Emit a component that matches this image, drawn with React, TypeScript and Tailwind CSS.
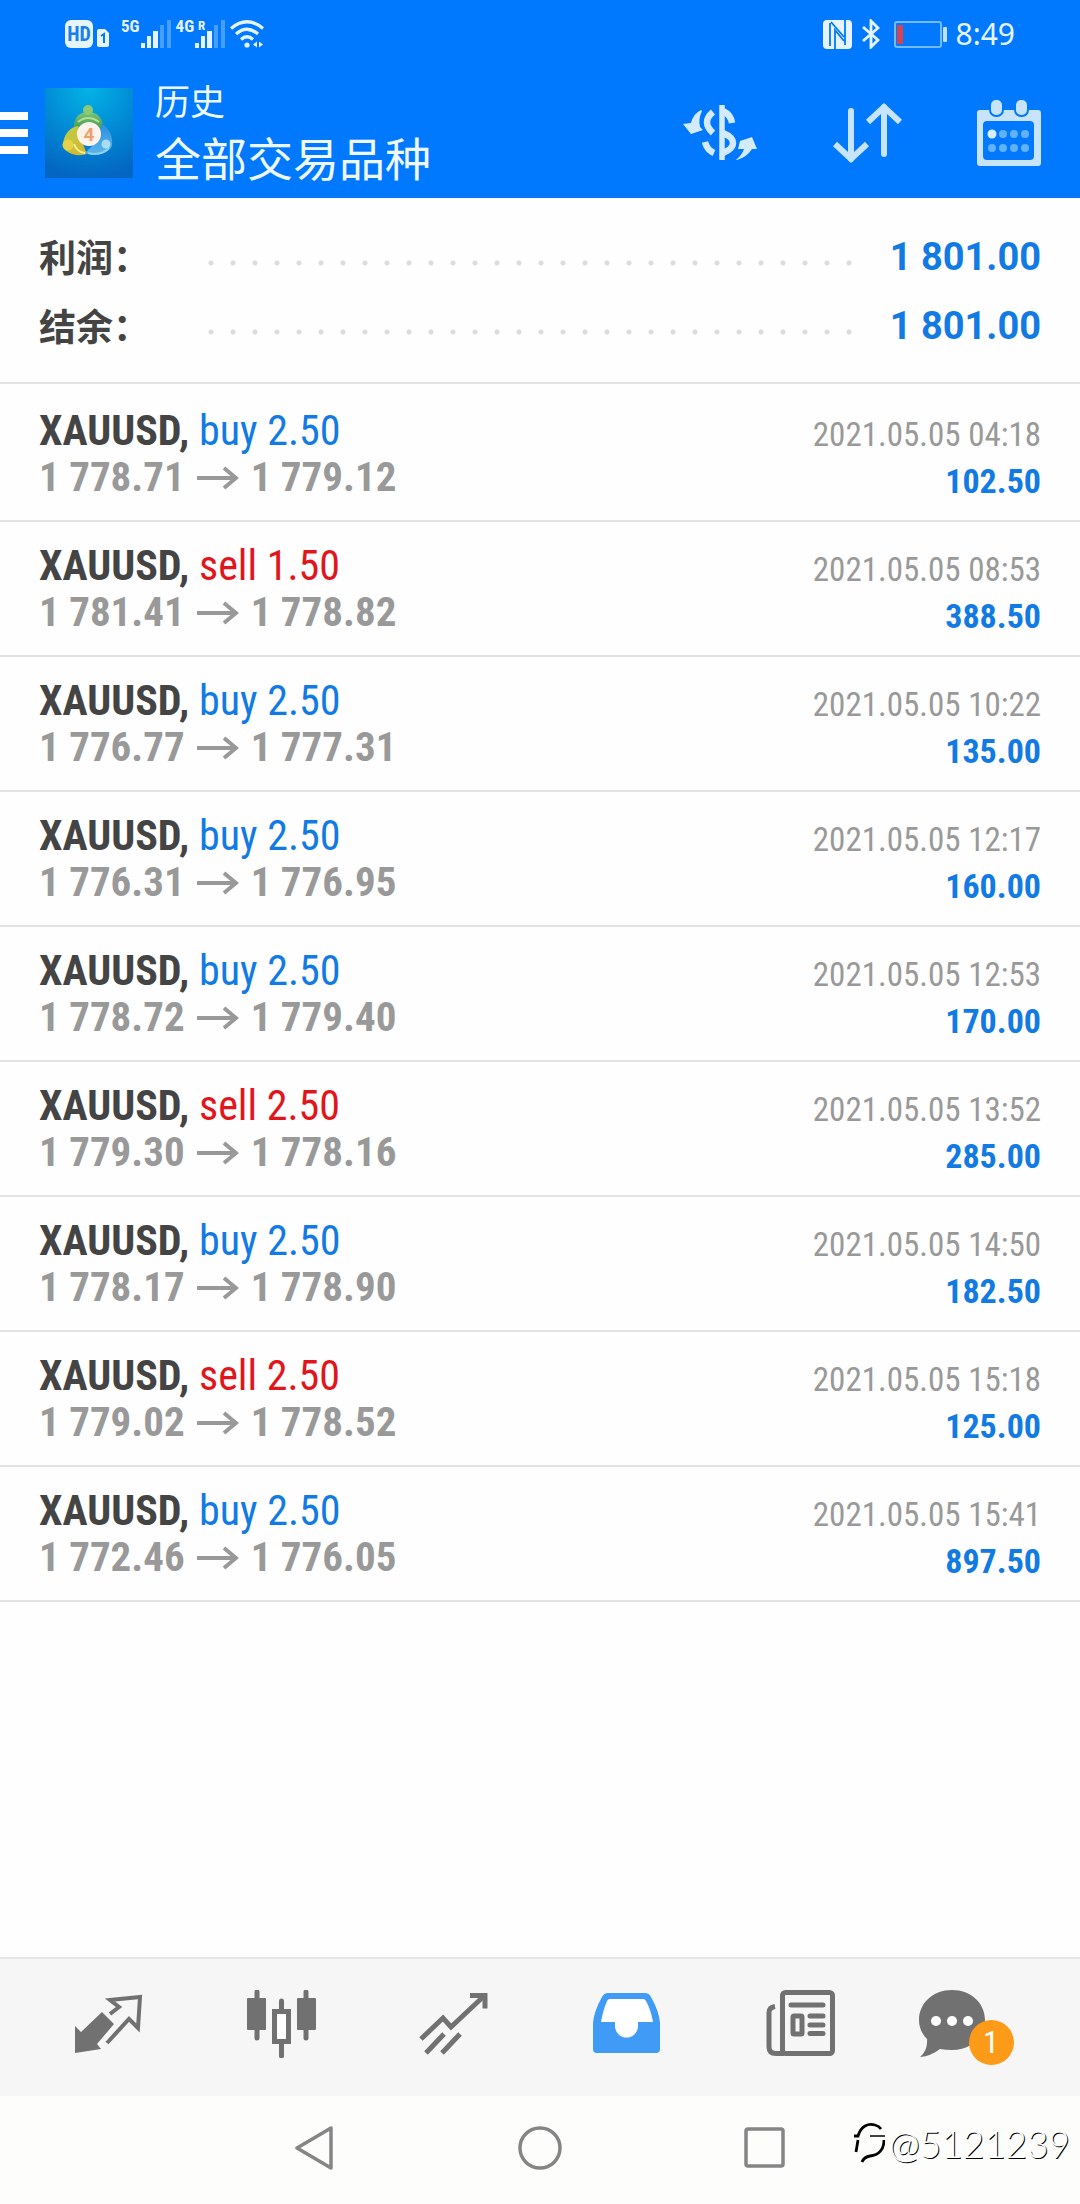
import { clsx } from "clsx";

interface Deal {
  symbol: string;
  side: "buy" | "sell";
  volume: string;
  open: string;
  close: string;
  time: string;
  profit: string;
}

const deals: Deal[] = [
  { symbol: "XAUUSD", side: "buy", volume: "2.50", open: "1 778.71", close: "1 779.12", time: "2021.05.05 04:18", profit: "102.50" },
  { symbol: "XAUUSD", side: "sell", volume: "1.50", open: "1 781.41", close: "1 778.82", time: "2021.05.05 08:53", profit: "388.50" },
  { symbol: "XAUUSD", side: "buy", volume: "2.50", open: "1 776.77", close: "1 777.31", time: "2021.05.05 10:22", profit: "135.00" },
  { symbol: "XAUUSD", side: "buy", volume: "2.50", open: "1 776.31", close: "1 776.95", time: "2021.05.05 12:17", profit: "160.00" },
  { symbol: "XAUUSD", side: "buy", volume: "2.50", open: "1 778.72", close: "1 779.40", time: "2021.05.05 12:53", profit: "170.00" },
  { symbol: "XAUUSD", side: "sell", volume: "2.50", open: "1 779.30", close: "1 778.16", time: "2021.05.05 13:52", profit: "285.00" },
  { symbol: "XAUUSD", side: "buy", volume: "2.50", open: "1 778.17", close: "1 778.90", time: "2021.05.05 14:50", profit: "182.50" },
  { symbol: "XAUUSD", side: "sell", volume: "2.50", open: "1 779.02", close: "1 778.52", time: "2021.05.05 15:18", profit: "125.00" },
  { symbol: "XAUUSD", side: "buy", volume: "2.50", open: "1 772.46", close: "1 776.05", time: "2021.05.05 15:41", profit: "897.50" },
];

const summary = [
  { label: "利润：", value: "1 801.00" },
  { label: "结余：", value: "1 801.00" },
];

function SignalBars() {
  return (
    <svg className="h-7 w-8" viewBox="0 0 32 28" fill="#e6f4ff">
      <rect x="1" y="23" width="4" height="5" />
      <rect x="7" y="16" width="4" height="12" />
      <rect x="13" y="11" width="5" height="17" />
      <g opacity="0.3">
        <rect x="20" y="5" width="4" height="23" />
        <rect x="27" y="0" width="4" height="28" />
      </g>
    </svg>
  );
}

function StatusBar() {
  return (
    <div className="flex h-[68px] items-center justify-between px-[65px] text-[#e6f4ff]">
      <div className="flex items-center">
        <span className="flex h-7 w-7 items-center justify-center rounded-md bg-[#e6f4ff] font-['Roboto_Condensed',sans-serif] text-[20px] font-bold text-[#1a7fe8]">
          HD
        </span>
        <svg className="mt-2 ml-1 h-[18px] w-3" viewBox="0 0 12 18">
          <path d="M2 0h6l4 4v12q0 2-2 2H2q-2 0-2-2V2q0-2 2-2z" fill="#e6f4ff" />
          <path d="M4 7l3-2v9" fill="none" stroke="#0079ff" strokeWidth="2" />
        </svg>
        <span className="mb-4 ml-3 font-['Roboto_Condensed',sans-serif] text-[17px] leading-none font-bold">5G</span>
        <SignalBars />
        <span className="mb-4 ml-1 font-['Roboto_Condensed',sans-serif] text-[17px] leading-none font-bold">4G</span>
        <span className="relative">
          <SignalBars />
          <span className="absolute -top-px left-1 font-['Roboto_Condensed',sans-serif] text-[13px] leading-none font-bold">
            R
          </span>
        </span>
        <svg className="ml-1 h-7 w-[34px]" viewBox="0 0 34 28" fill="none" stroke="#e6f4ff" strokeWidth="3.2">
          <path d="M1 8.500Q17-5 33 8.500" />
          <path d="M6 14Q17 4.500 28 14" />
          <path d="M11 19.500Q17 14 23 19.500" />
          <circle cx="17" cy="25" r="2.600" fill="#e6f4ff" stroke="none" />
          <path d="M27 21.500l-4 3 4 3zM29 21.500l4 3-4 3z" fill="#e6f4ff" stroke="none" />
        </svg>
      </div>
      <div className="flex items-center">
        <svg className="h-[29px] w-[29px]" viewBox="0 0 29 29">
          <path d="M4 0h21q4 0 4 4v21q0 4-4 4H4q-4 0-4-4V4q0-4 4-4z" fill="#e6f4ff" />
          <path d="M7 3v23M12 29V10l9 11M8 2l13 15M22 0v25" stroke="#0079ff" strokeWidth="1.800" fill="none" />
        </svg>
        <svg className="ml-[10px] h-[30px] w-[18px]" viewBox="0 0 18 30" fill="none" stroke="#e6f4ff" strokeWidth="2.800">
          <path d="M1 8l15 13-7 7V2l7 7L1 22" />
        </svg>
        <svg className="ml-[14px] h-[27px] w-[54px]" viewBox="0 0 54 27">
          <rect x="1" y="1" width="46" height="25" rx="2" fill="none" stroke="#74baff" strokeWidth="2" />
          <rect x="3" y="4" width="6" height="19" fill="#d8434e" />
          <rect x="49" y="6" width="4" height="15" rx="1" fill="#bfe0ff" />
        </svg>
        <span className="ml-[7px] font-['Noto_Sans',sans-serif] text-[30px] leading-none">8:49</span>
      </div>
    </div>
  );
}

function AppLogo() {
  return (
    <svg className="h-[90px] w-[88px]" viewBox="0 0 88 90">
      <defs>
        <radialGradient id="logo-bg" cx="0.5" cy="0" r="1">
          <stop offset="0" stopColor="#02b4e6" />
          <stop offset="0.55" stopColor="#0288d4" />
          <stop offset="1" stopColor="#0366c2" />
        </radialGradient>
        <linearGradient id="logo-green" x1="0" y1="0" x2="0" y2="1">
          <stop offset="0" stopColor="#7cc47a" />
          <stop offset="1" stopColor="#2f8f4a" />
        </linearGradient>
        <linearGradient id="logo-yellow" x1="0" y1="0" x2="1" y2="1">
          <stop offset="0" stopColor="#b9cf4a" />
          <stop offset="1" stopColor="#d9b42c" />
        </linearGradient>
        <linearGradient id="logo-blue" x1="0" y1="0" x2="0" y2="1">
          <stop offset="0" stopColor="#2a8fdc" />
          <stop offset="1" stopColor="#5db6ec" />
        </linearGradient>
      </defs>
      <rect width="88" height="90" fill="url(#logo-bg)" />
      <path d="M29 42C28 31 33 24 43 24s16 7 15 18l-6 4H35z" fill="url(#logo-green)" />
      <path d="M33 34Q43 26 54 34" stroke="#b4e08e" strokeWidth="2" fill="none" />
      <circle cx="43" cy="22" r="5" fill="#8ccb74" />
      <path d="M33 38C24 39 18 48 18 58c3 8 14 11 24 8l-5-12z" fill="url(#logo-yellow)" />
      <path d="M29 56q3 8 11 9" stroke="#f6ec9a" strokeWidth="2" fill="none" />
      <circle cx="23" cy="57" r="5.500" fill="#e6d24a" />
      <path d="M57 36c8 5 11 12 10 22-4 8-16 11-27 7l8-8z" fill="url(#logo-blue)" />
      <path d="M43 65c8 2 16 0 21-5" stroke="#8fd0f2" strokeWidth="2" fill="none" />
      <circle cx="61" cy="56" r="4.500" fill="#a9dcf6" />
      <circle cx="44" cy="46" r="12" fill="#fdf3ea" />
      <text x="44" y="53" textAnchor="middle" fontFamily="Roboto" fontWeight="700" fontSize="19" fill="#f0a070">
        4
      </text>
    </svg>
  );
}

function CurrencyIcon() {
  return (
    <svg className="h-[62px] w-[76px]" viewBox="5 10 76 62" fill="none" stroke="#d3ebfd">
      <path d="M45 13v55" strokeWidth="5.500" />
      <path d="M36 20Q24 30 36 41M46 19Q54 23 55 31M28 50Q30 58 37 61M46 41Q56 45 56 51T46 61" strokeWidth="6.500" />
      <path d="M24 18Q16 22 14 31l-8 1 8 10 12-4-3-3q-2-8 2-16z" fill="#d3ebfd" stroke="none" />
      <path d="M59 68q6-5 8-11l-6 0 2-8 12-4 5 12-5 0q-5 8-15 11z" fill="#d3ebfd" stroke="none" />
    </svg>
  );
}

function SortIcon() {
  return (
    <svg className="h-[62px] w-[70px]" viewBox="190 101 70 62" fill="none" stroke="#c8e4fd" strokeWidth="6">
      <path d="M209 110v48M242 106v47" strokeLinecap="round" />
      <path d="M193 143l16 15 16-15M226 121l16-15 16 15" />
    </svg>
  );
}

function CalendarIcon() {
  return (
    <svg className="h-[68px] w-[66px]" viewBox="336 97 66 68">
      <path
        fillRule="evenodd"
        d="M340 108h58q3 0 3 3v50q0 3-3 3h-58q-3 0-3-3v-50q0-3 3-3zM347 119q-4 0-4 4v31q0 4 4 4h43q4 0 4-4v-31q0-4-4-4z"
        fill="#c8e4fd"
      />
      <g fill="#c8e4fd" stroke="#0079ff" strokeWidth="2">
        <rect x="350" y="97" width="13" height="17" rx="6" />
        <rect x="375" y="97" width="13" height="17" rx="6" />
      </g>
      <circle cx="352" cy="132" r="4.500" fill="#d8edff" />
      <g fill="#62b1fd">
        <circle cx="363" cy="132" r="4" />
        <circle cx="374" cy="132" r="4" />
        <circle cx="385" cy="132" r="4" />
        <circle cx="352" cy="146" r="4" />
        <circle cx="363" cy="146" r="4" />
        <circle cx="374" cy="146" r="4" />
        <circle cx="385" cy="146" r="4" />
      </g>
    </svg>
  );
}

function Header() {
  return (
    <header className="bg-[#0079ff]">
      <StatusBar />
      <div className="flex h-[130px] items-center pr-[38px]">
        <button aria-label="菜单" className="flex flex-col gap-[9px]">
          <span className="h-2 w-7 bg-white" />
          <span className="h-2 w-7 bg-white" />
          <span className="h-2 w-7 bg-white" />
        </button>
        <div className="ml-[17px]">
          <AppLogo />
        </div>
        <div className="ml-[22px] flex-1 pb-[10px] font-['Noto_Sans_CJK_SC',sans-serif] text-[#eef8ff]">
          <p className="text-[35px] leading-[56px]">历史</p>
          <h1 className="text-[46px] leading-[56px]">全部交易品种</h1>
        </div>
        <div className="flex items-center gap-[74px]">
          <button aria-label="交易品种">
            <CurrencyIcon />
          </button>
          <button aria-label="排序">
            <SortIcon />
          </button>
          <button aria-label="日期">
            <CalendarIcon />
          </button>
        </div>
      </div>
    </header>
  );
}

function Summary() {
  return (
    <dl className="border-b-2 border-[#e3e3e3] px-[39px] pt-6 pb-[22px]">
      {summary.map((row) => (
        <div key={row.label} className="flex h-[69px] items-center">
          <dt className="w-[161px] font-['Noto_Sans_CJK_SC',sans-serif] text-[37px] leading-none font-bold text-[#444]">
            {row.label}
          </dt>
          <span className="mt-3 h-[6px] flex-1 bg-[radial-gradient(circle,#dcdcdc_2px,transparent_3px)] bg-[length:22px_6px] bg-repeat-x" />
          <dd className="w-[180px] text-right font-['Roboto',sans-serif] text-[38px] leading-none font-bold text-[#127be3]">
            {row.value}
          </dd>
        </div>
      ))}
    </dl>
  );
}

function DealRow({ deal }: { deal: Deal }) {
  return (
    <li className="flex justify-between border-b-2 border-[#e3e3e3] px-[39px] pt-5 pb-[15px] leading-[47px] first:pt-[23px]">
      <div>
        <p className="text-[42px]">
          <span className="font-bold text-[#444]">{deal.symbol},</span>{" "}
          <span className={clsx(deal.side === "buy" ? "text-[#127be3]" : "text-[#e0161c]")}>
            {deal.side} {deal.volume}
          </span>
        </p>
        <p className="flex items-center gap-3 text-[41px] font-bold text-[#999]">
          {deal.open}
          <svg className="h-6 w-[42px]" viewBox="0 0 42 24" fill="none" stroke="#999" strokeWidth="4">
            <path d="M0 12h39M27 2l12 10-12 10" />
          </svg>
          {deal.close}
        </p>
      </div>
      <div className="text-right">
        <p className="pt-1 text-[33px] text-[#999]">{deal.time}</p>
        <p className="text-[34px] font-bold text-[#127be3]">{deal.profit}</p>
      </div>
    </li>
  );
}

function TabBar() {
  return (
    <nav className="grid h-[139px] grid-cols-6 items-center border-t-2 border-[#e6e6e6] bg-[#f6f6f6] px-[21px] pb-2">
      <button aria-label="行情" className="flex justify-center">
        <svg className="h-[68px] w-[72px]" viewBox="0 0 72 68">
          <path d="M3 36l6 6L30 22l12 12-17 20 4 5-26 4z" fill="#717171" />
          <path d="M38 24l9-7-9-7 30-3-2 31-9-9-22 24" fill="none" stroke="#717171" strokeWidth="4" />
        </svg>
      </button>
      <button aria-label="图表" className="flex justify-center">
        <svg className="h-[68px] w-[72px]" viewBox="0 0 72 68" fill="#717171" stroke="#717171">
          <path d="M12 2v46M61 2v46M36.500 11v8M36.500 53v13" strokeWidth="5" strokeLinecap="round" />
          <rect x="2" y="8" width="19" height="32" rx="1" stroke="none" />
          <rect x="52" y="8" width="19" height="32" rx="1" stroke="none" />
          <rect x="29.500" y="21.500" width="14" height="30" fill="#fff" strokeWidth="5" />
        </svg>
      </button>
      <button aria-label="交易" className="flex justify-center">
        <svg className="h-[68px] w-[72px]" viewBox="0 0 72 68" fill="none" stroke="#717171" strokeWidth="5">
          <path d="M3 49l22-21 8 9L66 6" />
          <path d="M52 5.500h15v13" />
          <path d="M8 63l18-19M24 63l18-19" />
        </svg>
      </button>
      <button aria-label="历史" className="flex justify-center">
        <svg className="h-[68px] w-[72px]" viewBox="0 0 72 68">
          <path d="M18 8h36l8 24-12 18H22L10 32z" fill="#fff" />
          <path
            fillRule="evenodd"
            d="M17 3h37q4 0 6 4 8 14 9 26v26q0 4-4 4H6q-4 0-4-4V33q1-12 9-26 2-4 6-4zM19 9q-2 0-3 2-4 9-6 21h14v4a11.500 11.500 0 0 0 23 0v-4h15q-2-12-7-21-1-2-3-2z"
            fill="#3f9bf5"
          />
        </svg>
      </button>
      <button aria-label="新闻" className="flex justify-center">
        <svg className="h-[68px] w-[72px]" viewBox="0 0 72 68" fill="none" stroke="#717171" strokeWidth="5">
          <path d="M11 16.500q-6 1-6 6V57q0 6.500 7 6.500h8" strokeWidth="5" />
          <rect x="18.500" y="2.500" width="50" height="61" rx="3" />
          <path d="M27 15h32M46 26h13M46 35h13M46 43.500h13" strokeLinecap="round" />
          <rect x="29" y="26" width="9" height="18" rx="1" />
        </svg>
      </button>
      <button aria-label="邮箱" className="flex justify-center pr-10">
        <span className="relative">
          <svg className="h-[68px] w-[72px]" viewBox="0 0 72 68">
            <path
              d="M35 0c19 0 33 13 33 30S54 60 35 60q-7 0-12-1Q14 66 3 67q8-7 7-18Q2 41 2 30C2 13 16 0 35 0z"
              fill="#717171"
            />
            <circle cx="19" cy="31" r="5" fill="#fff" />
            <circle cx="35" cy="31" r="5" fill="#fff" />
            <circle cx="51" cy="31" r="5" fill="#fff" />
          </svg>
          <span className="absolute top-[30px] left-[52px] flex h-[45px] w-[45px] items-center justify-center rounded-full bg-[#fd9a17] font-['Roboto_Condensed',sans-serif] text-[32px] leading-none text-white">
            1
          </span>
        </span>
      </button>
    </nav>
  );
}

function SystemNav() {
  return (
    <div className="relative flex h-[108px] items-center justify-center gap-[181px] bg-[#fdfdfc] pb-1">
      <button aria-label="返回">
        <svg className="h-11 w-11" viewBox="0 0 44 44" fill="none" stroke="#858585" strokeWidth="3.500" strokeLinejoin="round">
          <path d="M4 22L38 2v40z" />
        </svg>
      </button>
      <button aria-label="主页">
        <svg className="h-11 w-11" viewBox="0 0 44 44" fill="none" stroke="#858585" strokeWidth="3.500">
          <circle cx="22" cy="22" r="20" />
        </svg>
      </button>
      <button aria-label="最近任务">
        <svg className="h-11 w-11" viewBox="0 0 44 44" fill="none" stroke="#858585" strokeWidth="3.500">
          <rect x="3" y="3" width="37" height="37" rx="2" />
        </svg>
      </button>
      <div className="absolute right-[10px] bottom-10 flex items-center gap-1">
        <svg className="h-[42px] w-8" viewBox="0 0 32 42" fill="none" stroke="#000" strokeWidth="2.800">
          <path d="M1 14h4C8 4 15 1 22 3q4 1 6 4" />
          <path d="M17 14h15" strokeWidth="1.500" />
          <path d="M5 18L3 30" />
          <path d="M31 18c0 9-5 15-14 16q-6 1-8 6" />
        </svg>
        <span className="font-['Lato',sans-serif] text-[37px] leading-none font-light text-white [text-shadow:1px_1px_0_#000]">
          @5121239
        </span>
      </div>
    </div>
  );
}

export default function App() {
  return (
    <div className="flex min-h-screen flex-col bg-[#fefefe] font-['Roboto_Condensed','Roboto',sans-serif]">
      <Header />
      <main className="flex-1">
        <Summary />
        <ul>
          {deals.map((deal) => (
            <DealRow key={deal.time} deal={deal} />
          ))}
        </ul>
      </main>
      <TabBar />
      <SystemNav />
    </div>
  );
}
